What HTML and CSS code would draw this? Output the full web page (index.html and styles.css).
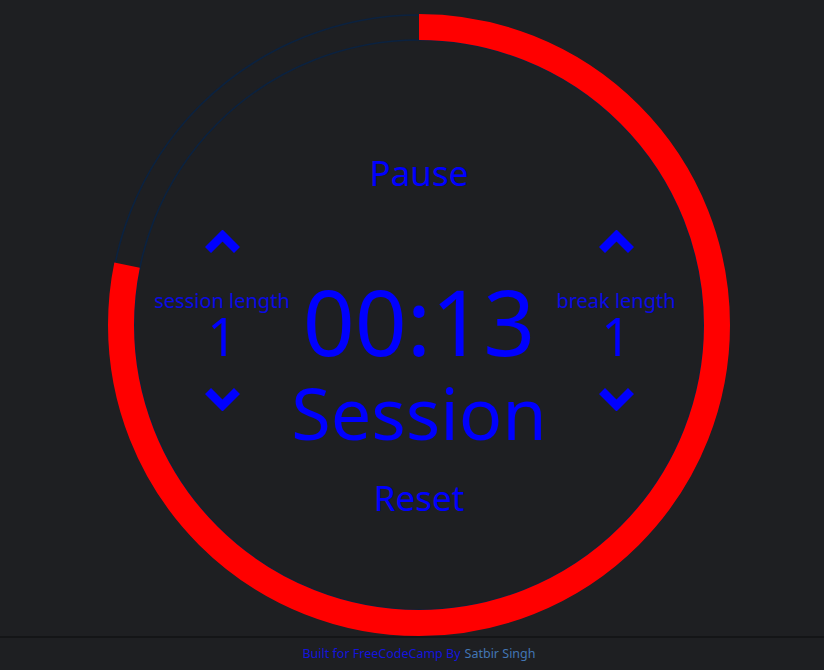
FILE: index.html
```html
<!DOCTYPE html>
<html lang="en">
<head>
<meta charset="utf-8">
<title>Pomodoro Clock</title>
<link rel="stylesheet" href="styles.css">
</head>
<body>
<main class="stage">
  <div class="dial">
    <svg class="ring" viewBox="0 0 622 622" width="622" height="622" aria-hidden="true">
      <circle cx="311" cy="311" r="310" class="track"/>
      <circle cx="311" cy="311" r="285" class="track"/>
      <circle cx="311" cy="311" r="298" class="progress" style="stroke-dasharray: 1464 1872.4"/>
    </svg>
    <div class="content">
      <button class="action">Pause</button>
      <div class="middle">
        <div class="side">
          <button class="chev" aria-label="increase session"><svg viewBox="0 0 35 23" width="35" height="23"><polyline points="3,20 17.5,5.5 32,20"/></svg></button>
          <div class="label">session length</div>
          <div class="num">1</div>
          <button class="chev" aria-label="decrease session"><svg viewBox="0 0 35 23" width="35" height="23"><polyline points="3,3 17.5,17.5 32,3"/></svg></button>
        </div>
        <div class="center">
          <div class="time">00:13</div>
          <div class="mode">Session</div>
        </div>
        <div class="side">
          <button class="chev" aria-label="increase break"><svg viewBox="0 0 35 23" width="35" height="23"><polyline points="3,20 17.5,5.5 32,20"/></svg></button>
          <div class="label">break length</div>
          <div class="num">1</div>
          <button class="chev" aria-label="decrease break"><svg viewBox="0 0 35 23" width="35" height="23"><polyline points="3,3 17.5,17.5 32,3"/></svg></button>
        </div>
      </div>
      <button class="action reset">Reset</button>
    </div>
  </div>
</main>
<footer class="footer">
  <span class="built">Built for FreeCodeCamp By</span> <a class="author" href="#">Satbir Singh</a>
</footer>
</body>
</html>
```

FILE: styles.css
```css
* { box-sizing: border-box; }

html, body {
  margin: 0;
  padding: 0;
  background: #1e1f22;
  font-family: "Noto Sans", "DejaVu Sans", sans-serif;
  color: #0000ff;
  overflow: hidden;
}

.stage {
  height: 636px;
  padding-top: 14px;
}

.dial {
  width: 622px;
  height: 622px;
  margin-left: 108px;
  display: grid;
}

.ring,
.content {
  grid-area: 1 / 1;
}

.ring {
  display: block;
}

.track {
  fill: none;
  stroke: #0b2240;
  stroke-width: 1.6;
}

.progress {
  fill: none;
  stroke: #ff0000;
  stroke-width: 26;
  transform: rotate(-90deg);
  transform-origin: 311px 311px;
}

.content {
  display: flex;
  flex-direction: column;
  align-items: center;
  padding-top: 139px;
}

button {
  background: none;
  border: 0;
  padding: 0;
  margin: 0;
  font-family: inherit;
  color: inherit;
  cursor: pointer;
}

.action {
  font-size: 35px;
  line-height: 40px;
  height: 40px;
}

.reset {
  margin-top: 30px;
}

.middle {
  display: flex;
  justify-content: center;
  align-items: flex-start;
  margin-top: 37px;
  width: 100%;
}

.side {
  width: 160px;
  display: flex;
  flex-direction: column;
  align-items: center;
}

.chev {
  width: 35px;
  height: 23px;
  display: block;
}

.chev svg {
  display: block;
}

.chev polyline {
  fill: none;
  stroke: #0000ff;
  stroke-width: 8.5;
  stroke-linejoin: miter;
  stroke-linecap: butt;
}

.label {
  margin-top: 36px;
  font-size: 20px;
  line-height: 24px;
  white-space: nowrap;
  color: #0a0ae6;
}

.num {
  font-size: 52px;
  line-height: 46px;
  height: 46px;
  margin-bottom: 29px;
}

.center {
  width: 234px;
  display: flex;
  flex-direction: column;
  align-items: center;
  padding-top: 46px;
}

.time {
  font-size: 91px;
  line-height: 91px;
  white-space: nowrap;
}

.mode {
  margin-top: 9px;
  font-size: 72px;
  line-height: 72px;
  white-space: nowrap;
}

.footer {
  height: 34px;
  border-top: 2px solid #141517;
  display: flex;
  justify-content: center;
  align-items: center;
  gap: 4px;
  font-size: 12.5px;
  padding-left: 14px;
  padding-bottom: 2px;
}

.built {
  color: #1414dc;
}

.author {
  color: #4275b4;
  text-decoration: none;
}
```
